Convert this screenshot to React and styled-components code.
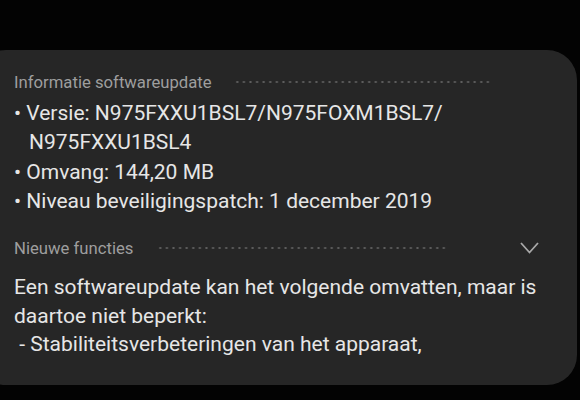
import React from "react";
import styled, { createGlobalStyle } from "styled-components";

const Global = createGlobalStyle`
  html, body { margin: 0; padding: 0; background: #030303; }
  body { width: 580px; height: 400px; overflow: hidden; font-family: Roboto, "Noto Sans", sans-serif; }
`;

const Screen = styled.div`
  width: 580px;
  height: 400px;
  padding-top: 50px;
  box-sizing: border-box;
  overflow: hidden;
`;

const Card = styled.div`
  margin-left: -24px;
  width: 601px;
  height: 335px;
  box-sizing: border-box;
  background: #262626;
  border-radius: 30px;
  padding: 20px 38px 0 38px;
`;

const SectionHeader = styled.div`
  display: flex;
  align-items: center;
  height: 24px;
  color: #9e9e9e;
  font-size: 16.7px;
  margin-top: ${(p) => p.$top || 0}px;
`;

const Dots = styled.div`
  flex: 1;
  height: 4px;
  margin-left: ${(p) => p.$gap}px;
  margin-right: ${(p) => p.$right}px;
  background-image: radial-gradient(circle, #5e5e5e 0.9px, transparent 1.3px);
  background-size: 6.6px 4px;
  background-repeat: repeat-x;
`;

const Chevron = styled.svg`
  width: 19px;
  height: 12px;
  flex: none;
`;

const List = styled.div`
  margin-top: 5px;
  color: #e6e6e6;
  font-size: 21px;
  line-height: 29.3px;
`;

const Item = styled.div`
  padding-left: ${(p) => (p.$indent ? 15 : 0)}px;
`;

const Para = styled.div`
  margin-top: 13px;
  color: #e6e6e6;
  font-size: 21px;
  line-height: 28.4px;
`;

export default function App() {
  return (
    <>
      <Global />
      <Screen>
        <Card>
          <SectionHeader>
            Informatie softwareupdate
            <Dots $gap={22} $right={46} />
          </SectionHeader>
          <List>
            <Item>• Versie: N975FXXU1BSL7/N975FOXM1BSL7/</Item>
            <Item $indent>N975FXXU1BSL4</Item>
            <Item>• Omvang: 144,20 MB</Item>
            <Item>• Niveau beveiligingspatch: 1 december 2019</Item>
          </List>
          <SectionHeader $top={20}>
            Nieuwe functies
            <Dots $gap={24} $right={72} />
            <Chevron viewBox="0 0 19 12">
              <path d="M1 1 L9.5 10.5 L18 1" fill="none" stroke="#a8a8a8" strokeWidth="1.8" />
            </Chevron>
          </SectionHeader>
          <Para>
            Een softwareupdate kan het volgende omvatten, maar is
            <br />
            daartoe niet beperkt:
            <br />
            &nbsp;- Stabiliteitsverbeteringen van het apparaat,
          </Para>
        </Card>
      </Screen>
    </>
  );
}
